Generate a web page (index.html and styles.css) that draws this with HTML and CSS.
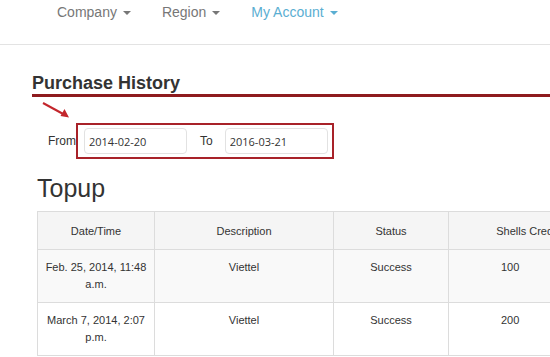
FILE: index.html
```html
<!DOCTYPE html>
<html>
<head>
<meta charset="utf-8">
<link rel="stylesheet" href="styles.css">
</head>
<body>
<nav class="navbar">
  <ul class="nav">
    <li class="nav-item">Company <span class="caret"></span></li>
    <li class="nav-item">Region <span class="caret"></span></li>
    <li class="nav-item active">My Account <span class="caret"></span></li>
  </ul>
</nav>
<main class="content">
  <h2 class="page-title">Purchase History</h2>
  <div class="filter-area">
    <svg class="arrow" width="30" height="18" viewBox="0 0 30 18">
      <line x1="1" y1="1" x2="23" y2="13" stroke="#c3262c" stroke-width="2"/>
      <polygon points="27,15.5 18.5,14 22.5,7" fill="#c3262c"/>
    </svg>
    <div class="filter-row">
      <span class="lbl from">From</span>
      <div class="highlight">
        <input class="date-input" type="text" value="2014-02-20">
        <span class="lbl to">To</span>
        <input class="date-input" type="text" value="2016-03-21">
      </div>
    </div>
  </div>
  <h3 class="section-title">Topup</h3>
  <div class="table-wrap">
    <table class="history">
      <colgroup>
        <col class="c1"><col class="c2"><col class="c3"><col class="c4">
      </colgroup>
      <thead>
        <tr><th>Date/Time</th><th>Description</th><th>Status</th><th>Shells Credited</th></tr>
      </thead>
      <tbody>
        <tr class="odd"><td>Feb. 25, 2014, 11:48 a.m.</td><td>Viettel</td><td>Success</td><td class="num">100</td></tr>
        <tr><td>March 7, 2014, 2:07 p.m.</td><td>Viettel</td><td>Success</td><td class="num">200</td></tr>
      </tbody>
    </table>
  </div>
</main>
</body>
</html>
```
FILE: styles.css
```css
html, body {
  margin: 0;
  padding: 0;
  background: #fff;
  font-family: "Liberation Sans", Arial, sans-serif;
  color: #333;
  overflow: hidden;
}
.navbar {
  height: 45px;
  border-bottom: 1px solid #e3e3e3;
  box-sizing: border-box;
}
.nav {
  list-style: none;
  margin: 0;
  padding: 4px 0 0 57px;
  display: flex;
  gap: 31px;
}
.nav-item {
  font-size: 14px;
  line-height: 17px;
  color: #777;
  display: flex;
  align-items: center;
}
.nav-item.active {
  color: #5aaed2;
}
.caret {
  display: inline-block;
  width: 0;
  height: 0;
  margin-left: 6px;
  margin-top: 1px;
  border-top: 4px solid currentColor;
  border-left: 4px solid transparent;
  border-right: 4px solid transparent;
}
.content {
  padding: 0 0 0 32px;
}
.page-title {
  margin: 28px 0 0 0;
  font-size: 18px;
  line-height: 20px;
  font-weight: bold;
  color: #333;
  border-bottom: 3px solid #8e1b1e;
  padding-bottom: 1px;
}
.filter-area {
  position: relative;
  padding-top: 26px;
}
.arrow {
  position: absolute;
  left: 10px;
  top: 5px;
}
.filter-row {
  display: flex;
  align-items: center;
}
.lbl {
  font-size: 12px;
  color: #333;
}
.from {
  margin-left: 16px;
  width: 28px;
}
.highlight {
  display: flex;
  align-items: center;
  border: 2px solid #a82229;
  height: 36px;
  box-sizing: border-box;
  width: 258px;
  padding-left: 6px;
}
.date-input {
  width: 103px;
  height: 26px;
  box-sizing: border-box;
  border: 1px solid #e2e2e2;
  border-radius: 4px;
  padding: 0 4px;
  font-family: "Open Sans", "DejaVu Sans", sans-serif;
  font-size: 11px;
  color: #333;
  background: #fff;
}
.to {
  margin: 0 12px 0 13px;
}
.section-title {
  margin: 14px 0 0 5px;
  font-size: 25px;
  line-height: 30px;
  font-weight: normal;
  color: #333;
}
.table-wrap {
  margin: 8px 0 0 5px;
  width: 581px;
}
.history {
  border-collapse: collapse;
  table-layout: fixed;
  width: 581px;
  font-size: 11px;
  line-height: 17px;
  color: #333;
}
.c1 { width: 117px; }
.c2 { width: 179px; }
.c3 { width: 115px; }
.c4 { width: 170px; }
.history th, .history td {
  border: 1px solid #dcdcdc;
  text-align: center;
  vertical-align: top;
  font-weight: normal;
}
.history th {
  padding: 11px 8px 9px;
  background: #f5f5f5;
  white-space: nowrap;
  overflow: hidden;
}
.history td {
  padding: 9px 3px;
  height: 34px;
}
.history td.num {
  text-align: left;
  padding-left: 52px;
}
.history tr.odd td {
  background: #f9f9f9;
}
```
